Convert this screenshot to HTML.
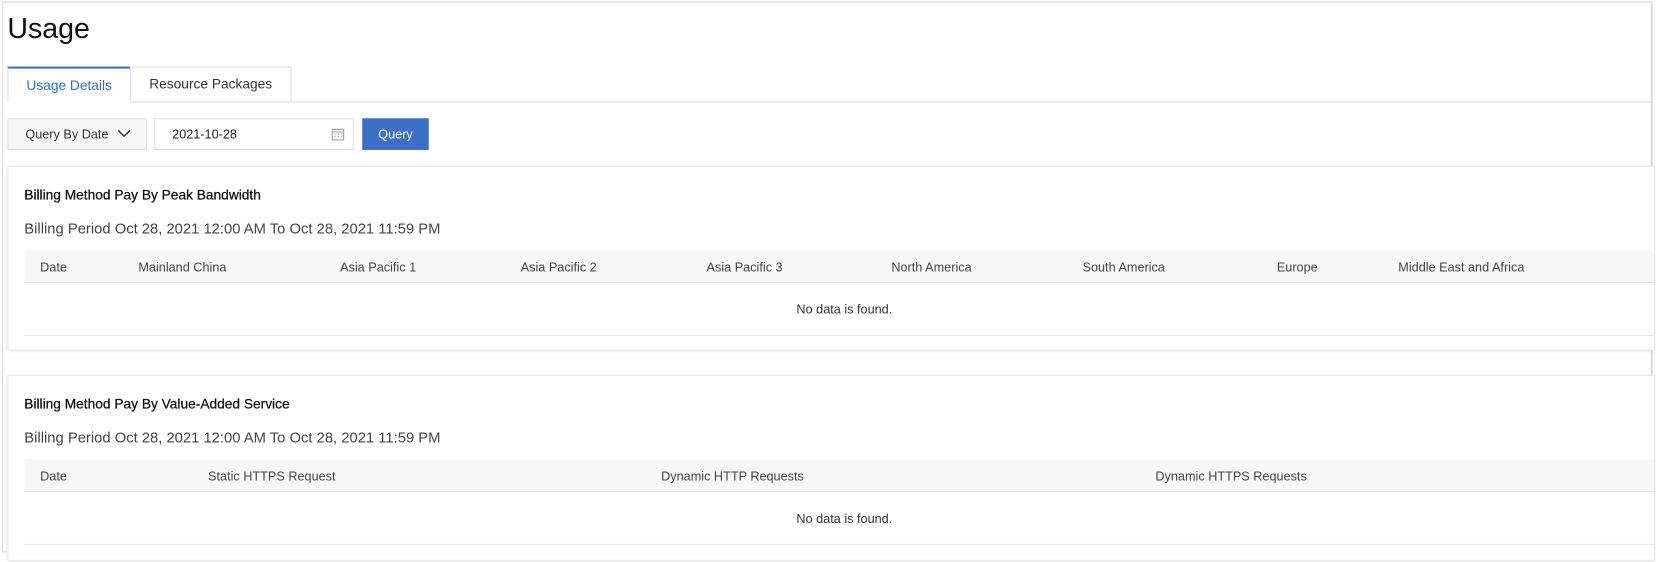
<!DOCTYPE html>
<html><head><meta charset="utf-8"><style>
*{box-sizing:border-box;margin:0;padding:0}
body{width:1656px;height:562px;background:#fff;font-family:"Liberation Sans",Arial,sans-serif;color:#333;overflow:hidden}
#w{position:absolute;left:0;top:0;width:1568px;height:532px;transform:scale(1.0561);transform-origin:0 0;overflow:hidden}
.a{position:absolute}
.frame{left:2px;top:1px;width:1563px;height:522px;border:1px solid #ddd;border-top:2px solid #e6e6e6;border-right:2px solid #ddd}
h1{position:absolute;left:7px;top:12px;font-size:27px;font-weight:normal;color:#111}
.tab{position:absolute;top:63px;height:34px;font-size:13px;line-height:32px;text-align:center;border:1px solid #ddd;background:#fff}
.card{position:absolute;left:7px;width:1560px;background:#fff;border:1px solid #e8e8e8;box-shadow:0 1px 3px rgba(0,0,0,.12)}
.t{position:absolute;font-size:13px;color:#111;-webkit-text-stroke:.25px #111}
.p{position:absolute;font-size:14px;color:#444}
.th{position:absolute;left:15px;right:0;height:31px;background:#f7f7f7;border-bottom:1px solid #e5e5e5;font-size:12px;color:#444}
.th span{position:absolute;top:9px}
.nd{position:absolute;left:15px;right:0;height:50px;border-bottom:1px solid #e5e5e5;font-size:12px;color:#333;text-align:center;line-height:50px;padding-left:10px}
</style></head><body><div id="w">
<div class="a frame"></div>
<h1>Usage</h1>
<div class="a" style="left:7px;top:96px;width:1558px;border-top:1px solid #ddd"></div>
<div class="tab" style="left:7px;width:117px;border-top:2px solid #3a70c9;border-bottom-color:#fff;color:#2e6fc9">Usage Details</div>
<div class="tab" style="left:123px;width:153px;color:#333">Resource Packages</div>
<div class="a" style="left:7px;top:112px;width:132px;height:30px;border:1px solid #ddd;background:#f7f7f7;font-size:12px;line-height:28px;padding-left:16px;color:#333">Query By Date
<svg class="a" style="left:103px;top:9px" width="13" height="9" viewBox="0 0 13 9"><path d="M1 1.5 6.5 7 12 1.5" fill="none" stroke="#333" stroke-width="1.4"/></svg></div>
<div class="a" style="left:146px;top:112px;width:189px;height:30px;border:1px solid #ddd;font-size:12px;line-height:28px;padding-left:16px;color:#222">2021-10-28
<svg class="a" style="left:167px;top:8px" width="12" height="12" viewBox="0 0 12 12"><rect x=".5" y="1.5" width="11" height="10" fill="none" stroke="#999"/><path d="M.5 4h11M3 6h1M6 6h1M9 6h1M3 8h1M6 8h1M9 8h1" stroke="#999"/></svg></div>
<div class="a" style="left:343px;top:112px;width:63px;height:30px;background:#3c6fc8;color:#fff;font-size:12px;line-height:30px;text-align:center">Query</div>

<div class="card" style="top:157px;height:175px">
<div class="t" style="left:15px;top:19px">Billing Method Pay By Peak Bandwidth</div>
<div class="p" style="left:15px;top:50px">Billing Period Oct 28, 2021 12:00 AM To Oct 28, 2021 11:59 PM</div>
<div class="th" style="top:79px"><span style="left:15px">Date</span><span style="left:108px">Mainland China</span><span style="left:299px">Asia Pacific 1</span><span style="left:470px">Asia Pacific 2</span><span style="left:646px">Asia Pacific 3</span><span style="left:821px">North America</span><span style="left:1002px">South America</span><span style="left:1186px">Europe</span><span style="left:1301px">Middle East and Africa</span></div>
<div class="nd" style="top:110px">No data is found.</div>
</div>

<div class="card" style="top:355px;height:176px">
<div class="t" style="left:15px;top:19px">Billing Method Pay By Value-Added Service</div>
<div class="p" style="left:15px;top:50px">Billing Period Oct 28, 2021 12:00 AM To Oct 28, 2021 11:59 PM</div>
<div class="th" style="top:79px"><span style="left:15px">Date</span><span style="left:174px">Static HTTPS Request</span><span style="left:603px">Dynamic HTTP Requests</span><span style="left:1071px">Dynamic HTTPS Requests</span></div>
<div class="nd" style="top:110px">No data is found.</div>
</div>
</div></body></html>
